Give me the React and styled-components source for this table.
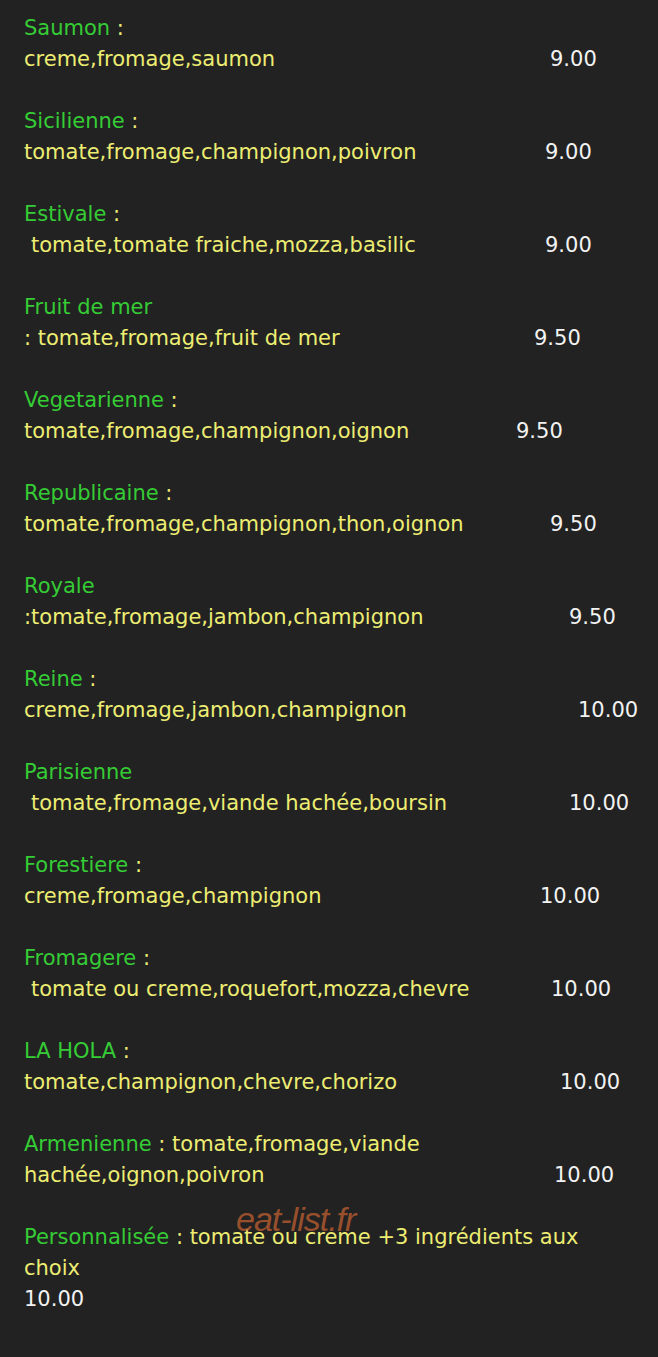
import React from "react";
import styled, { createGlobalStyle } from "styled-components";

const GlobalStyle = createGlobalStyle`
  html, body {
    margin: 0;
    padding: 0;
    background: #222222;
  }
`;

const pizzas = [
  { name: "Saumon", colon: " :", desc: "creme,fromage,saumon", price: "9.00", at: 526 },
  { name: "Sicilienne", colon: " :", desc: "tomate,fromage,champignon,poivron", price: "9.00", at: 521 },
  { name: "Estivale", colon: " :", desc: "tomate,tomate fraiche,mozza,basilic", price: "9.00", at: 521, indent: 7 },
  { name: "Fruit de mer", colon: "", desc: ": tomate,fromage,fruit de mer", price: "9.50", at: 510 },
  { name: "Vegetarienne", colon: " :", desc: "tomate,fromage,champignon,oignon", price: "9.50", at: 492 },
  { name: "Republicaine", colon: " :", desc: "tomate,fromage,champignon,thon,oignon", price: "9.50", at: 526 },
  { name: "Royale", colon: "", desc: ":tomate,fromage,jambon,champignon", price: "9.50", at: 545 },
  { name: "Reine", colon: " :", desc: "creme,fromage,jambon,champignon", price: "10.00", at: 554 },
  { name: "Parisienne", colon: "", desc: "tomate,fromage,viande hachée,boursin", price: "10.00", at: 545, indent: 7 },
  { name: "Forestiere", colon: " :", desc: "creme,fromage,champignon", price: "10.00", at: 516 },
  { name: "Fromagere", colon: " :", desc: "tomate ou creme,roquefort,mozza,chevre", price: "10.00", at: 527, indent: 7 },
  { name: "LA HOLA", colon: " :", desc: "tomate,champignon,chevre,chorizo", price: "10.00", at: 536 },
];

const Page = styled.div`
  position: relative;
  min-height: 1357px;
  box-sizing: border-box;
  padding: 13px 0 0 24px;
  background: #222222;
  font-family: "DejaVu Sans", Verdana, sans-serif;
  font-size: 21px;
  line-height: 31px;
  color: #eded72;
`;

const Entry = styled.div`
  margin-bottom: 31px;
`;

const Name = styled.span`
  color: #35cc35;
`;

const Line = styled.div`
  display: flex;
  white-space: nowrap;
`;

const Desc = styled.span`
  flex: none;
  box-sizing: border-box;
  width: ${(p) => p.$at}px;
  padding-left: ${(p) => p.$indent || 0}px;
`;

const Price = styled.span`
  color: #f2f2f2;
`;

const Wrap = styled.div`
  width: 580px;
`;

const Watermark = styled.div`
  position: absolute;
  left: 236px;
  top: 1204px;
  font-family: "Liberation Sans", Arial, sans-serif;
  font-style: italic;
  font-size: 34px;
  letter-spacing: -1px;
  color: rgba(185, 92, 48, 0.8);
  pointer-events: none;
`;

export default function App() {
  return (
    <>
      <GlobalStyle />
      <Page>
        {pizzas.map((p) => (
          <Entry key={p.name}>
            <div>
              <Name>{p.name}</Name>
              {p.colon}
            </div>
            <Line>
              <Desc $at={p.at} $indent={p.indent}>
                {p.desc}
              </Desc>
              <Price>{p.price}</Price>
            </Line>
          </Entry>
        ))}
        <Entry>
          <div>
            <Name>Armenienne</Name> : tomate,fromage,viande
          </div>
          <Line>
            <Desc $at={530}>hachée,oignon,poivron</Desc>
            <Price>10.00</Price>
          </Line>
        </Entry>
        <Entry>
          <Wrap>
            <Name>Personnalisée</Name> : tomate ou creme +3 ingrédients aux choix
          </Wrap>
          <Price>10.00</Price>
        </Entry>
        <Watermark>eat-list.fr</Watermark>
      </Page>
    </>
  );
}
